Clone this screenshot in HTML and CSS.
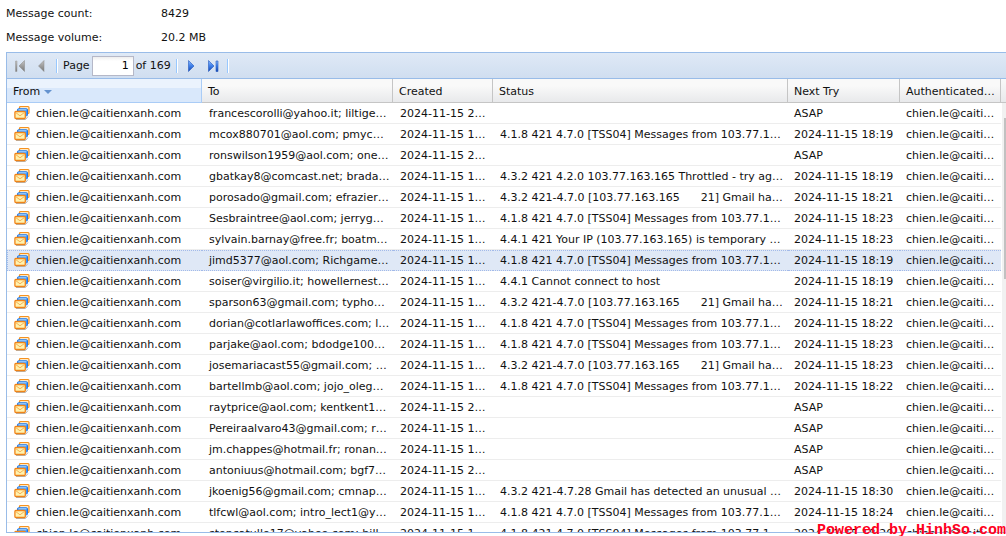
FILE: index.html
```html
<!DOCTYPE html>
<html lang="en">
<head>
<meta charset="utf-8">
<title>Message queue</title>
<link rel="stylesheet" href="styles.css">
</head>
<body>
<svg class="defs" aria-hidden="true">
  <symbol id="mail" viewBox="0 0 16 16">
    <rect x="5.500" y="1.500" width="9.500" height="7" rx="1" fill="#ffe9c4" stroke="#f59220" stroke-width="1.200"/>
    <rect x="3.500" y="3.800" width="10" height="7" rx="1" fill="#3a95ff" stroke="#1f78e8"/>
    <path d="M4.500 4.800h8" stroke="#b5dcff"/>
    <path d="M2 14.500h9.500l2.500-3" stroke="#b4b4b4" fill="none"/>
    <rect x=".9" y="6.500" width="10.400" height="7" rx="1" fill="#fff3b0" stroke="#f08418" stroke-width="1.300"/>
    <path d="M2 7.800l4 3 4-3" stroke="#f4a040" fill="none" stroke-width=".8"/>
  </symbol>
  <linearGradient id="grey" x2="0" y2="1"><stop stop-color="#c4c4c4"/><stop offset="1" stop-color="#777"/></linearGradient>
  <linearGradient id="blue" x2="0" y2="1"><stop stop-color="#8dbcff"/><stop offset=".5" stop-color="#3d7ee8"/><stop offset="1" stop-color="#1746ad"/></linearGradient>
</svg>
<dl class="summary">
  <dt>Message count:</dt><dd>8429</dd>
  <dt>Message volume:</dt><dd>20.2 MB</dd>
</dl>
<main class="panel">
  <div class="toolbar">
    <button class="nav" aria-label="First page" disabled><svg viewBox="0 0 16 16"><path d="M3.500 3h1.500v10.500h-1.500z" fill="url(#grey)" stroke="#999" stroke-width=".5"/><path d="M12.500 2.500v11L7 8z" fill="url(#grey)" stroke="#888" stroke-width=".5"/></svg></button>
    <button class="nav" aria-label="Previous page" disabled><svg viewBox="0 0 16 16"><path d="M10 2.500v11L4.500 8z" fill="url(#grey)" stroke="#888" stroke-width=".5"/></svg></button>
    <span class="sep"></span>
    <label for="page">Page</label>
    <input id="page" class="page" value="1">
    <span class="total">of 169</span>
    <span class="sep"></span>
    <button class="nav" aria-label="Next page"><svg viewBox="0 0 16 16"><path d="M5.500 2.500v11L11 8z" fill="url(#blue)" stroke="#2458bd" stroke-width=".6"/></svg></button>
    <button class="nav" aria-label="Last page"><svg viewBox="0 0 16 16"><path d="M3.500 2.500v11L9 8z" fill="url(#blue)" stroke="#2458bd" stroke-width=".6"/><path d="M11 3h2v10.500h-2z" fill="url(#blue)" stroke="#2458bd" stroke-width=".6"/></svg></button>
    <span class="sep"></span>
  </div>
  <div class="grid">
    <table class="queue">
      <colgroup><col class="c-from"><col class="c-to"><col class="c-created"><col><col class="c-next"><col class="c-auth"></colgroup>
      <thead><tr><th class="sorted">From<span class="arrow"></span></th><th>To</th><th>Created</th><th>Status</th><th>Next Try</th><th>Authenticated…</th></tr></thead>
      <tbody id="rows"></tbody>
    </table>
    <div class="side"><div class="cap"></div><div class="track"><div class="thumb"></div></div></div>
  </div>
</main>
<div class="credit">Powered by HinhSo.com</div>
<script src="app.js"></script>
</body>
</html>
```
FILE: styles.css
```css
* { box-sizing: border-box; }
body {
  margin: 0;
  height: 100vh;
  padding: 2px 0 3px 6px;
  display: flex;
  flex-direction: column;
  overflow: hidden;
  background: #fff;
  color: #111;
  font: 11px/16px "DejaVu Sans", Verdana, sans-serif;
}
.defs { position: absolute; width: 0; height: 0; }
.summary {
  margin: 0;
  height: 50px;
  flex: none;
  display: grid;
  grid-template-columns: 155px 1fr;
  grid-auto-rows: 24px;
  line-height: 24px;
}
.summary dd { margin: 0; }
.panel {
  flex: 1;
  min-height: 0;
  display: flex;
  flex-direction: column;
  border: 1px solid #99bce8;
  border-right: 0;
}
.toolbar {
  flex: none;
  height: 26px;
  display: flex;
  align-items: center;
  padding-left: 5px;
  border-bottom: 1px solid #99bce8;
  background: linear-gradient(#dfe9f6, #d0def0);
}
.nav {
  width: 16px;
  height: 16px;
  margin-right: 6px;
  padding: 0;
  border: 0;
  background: none;
}
.nav svg { display: block; width: 16px; height: 16px; }
.sep {
  width: 2px;
  height: 14px;
  margin-right: 5px;
  border-left: 1px solid #98c8ff;
  border-right: 1px solid #fff;
}
.toolbar label, .total { padding-top: 1px; }
.page {
  width: 42px;
  height: 20px;
  margin: 0 2px;
  padding: 0 4px 1px 2px;
  border: 1px solid #b5b8c8;
  background: linear-gradient(#eee, #fff 4px);
  color: #000;
  font: inherit;
  text-align: right;
}
.total { margin-right: 5px; }
.grid { flex: 1; min-height: 0; display: flex; overflow: hidden; align-items: stretch; }
.queue {
  flex: 1;
  min-width: 0;
  width: 0;
  align-self: flex-start;
  table-layout: fixed;
  border-collapse: separate;
  border-spacing: 0;
}
.c-from { width: 195px; }
.c-to { width: 191px; }
.c-created { width: 100px; }
.c-next { width: 112px; }
.c-auth { width: 101px; }
th, td { overflow: hidden; white-space: pre; text-align: left; }
th {
  height: 24px;
  padding: 2px 0 0 6px;
  border-right: 1px solid #c5c5c5;
  border-bottom: 1px solid #c5c5c5;
  background: linear-gradient(#f9f9f9, #f9f9f9 30%, #e8e9eb);
  font-weight: normal;
}
.sorted {
  border-color: #aaccf6;
  background: linear-gradient(#ebf3fd 9px, #d9e8fb 9px);
}
.arrow {
  display: inline-block;
  margin-left: 4px;
  vertical-align: 1px;
  border: 4px solid transparent;
  border-top-color: #6593cf;
  border-bottom: 0;
}
td {
  height: 21px;
  padding: 0 0 0 7px;
  border-top: 1px solid #fff;
  border-bottom: 1px solid #ededed;
  line-height: 19px;
}
td:nth-child(n+5) { padding-left: 6px; }
.mail { width: 16px; height: 16px; margin-right: 6px; vertical-align: -4px; }
.selected td {
  background: #dfe8f6;
  border-top: 1px dotted #a3bae9;
  border-bottom: 1px dotted #a3bae9;
}
.selected td:first-child { border-left: 1px dotted #a3bae9; padding-left: 6px; }
.side { width: 5px; flex: none; display: flex; flex-direction: column; }
.cap { height: 24px; flex: none; border-bottom: 1px solid #c5c5c5; background: linear-gradient(#f9f9f9, #e8e9eb); }
.track { flex: 1; margin-left: 1px; padding: 15px 0 0 2px; background: #f1f1f1; }
.thumb { height: 39%; background: #c1c1c1; }
.credit {
  position: absolute;
  right: 0;
  bottom: 0;
  color: #ff0020;
  font: bold 15px/11px "Liberation Mono", monospace;
}
```
FILE: app.js
```js
const tss = '4.1.8 421 4.7.0 [TSS04] Messages from 103.77.1…';
const gmail = '4.3.2 421-4.7.0 [103.77.163.165      21] Gmail ha…';
const rows = [
  ['francescorolli@yahoo.it; liltige…', 2, '', ''],
  ['mcox880701@aol.com; pmyc…', 1, tss, '18:19'],
  ['ronswilson1959@aol.com; one…', 2, '', ''],
  ['gbatkay8@comcast.net; brada…', 1, '4.3.2 421 4.2.0 103.77.163.165 Throttled - try ag…', '18:19'],
  ['porosado@gmail.com; efrazier…', 1, gmail, '18:21'],
  ['Sesbraintree@aol.com; jerryg…', 1, tss, '18:23'],
  ['sylvain.barnay@free.fr; boatm…', 1, '4.4.1 421 Your IP (103.77.163.165) is temporary …', '18:23'],
  ['jimd5377@aol.com; Richgame…', 1, tss, '18:19'],
  ['soiser@virgilio.it; howellernest…', 1, '4.4.1 Cannot connect to host', '18:19'],
  ['sparson63@gmail.com; typho…', 1, gmail, '18:21'],
  ['dorian@cotlarlawoffices.com; l…', 1, tss, '18:22'],
  ['parjake@aol.com; bdodge100…', 1, tss, '18:23'],
  ['josemariacast55@gmail.com; …', 1, gmail, '18:23'],
  ['bartellmb@aol.com; jojo_oleg…', 1, tss, '18:22'],
  ['raytprice@aol.com; kentkent1…', 2, '', ''],
  ['Pereiraalvaro43@gmail.com; r…', 1, '', ''],
  ['jm.chappes@hotmail.fr; ronan…', 1, '', ''],
  ['antoniuus@hotmail.com; bgf7…', 2, '', ''],
  ['jkoenig56@gmail.com; cmnap…', 1, '4.3.2 421-4.7.28 Gmail has detected an unusual …', '18:30'],
  ['tlfcwl@aol.com; intro_lect1@y…', 1, tss, '18:24'],
  ['stoncatullo17@yahoo.com; bill…', 1, tss, '18:20']
];
const icon = '<svg class="mail"><use href="#mail"/></svg>';
document.getElementById('rows').innerHTML = rows.map(([to, hour, status, next], i) =>
  `<tr${i === 7 ? ' class="selected"' : ''}><td>${icon}chien.le@caitienxanh.com</td><td>${to}</td>` +
  `<td>2024-11-15 ${hour}…</td><td>${status}</td><td>${next ? '2024-11-15 ' + next : 'ASAP'}</td><td>chien.le@caiti…</td></tr>`
).join('');
```
